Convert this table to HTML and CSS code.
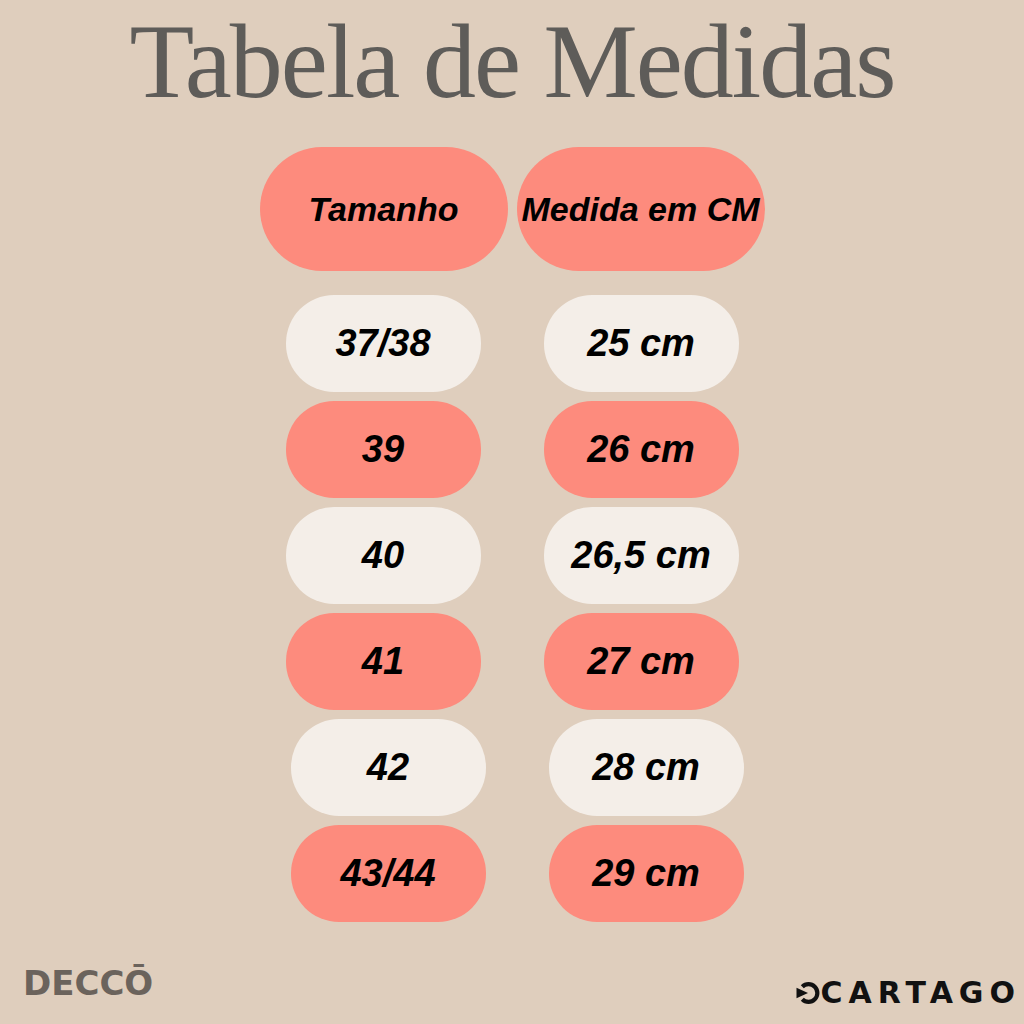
FILE: index.html
```html
<!DOCTYPE html>
<html lang="pt">
<head>
<meta charset="utf-8">
<title>Tabela de Medidas</title>
<link rel="stylesheet" href="styles.css">
</head>
<body>
<div class="page">
  <h1 class="title">Tabela de Medidas</h1>
  <div class="table">
    <div class="head-row">
      <div class="pill head">Tamanho</div>
      <div class="pill head">Medida em CM</div>
    </div>
    <div class="rows">
      <div class="row"><div class="pill cell light">37/38</div><div class="pill cell light">25 cm</div></div>
      <div class="row"><div class="pill cell salmon">39</div><div class="pill cell salmon">26 cm</div></div>
      <div class="row"><div class="pill cell light">40</div><div class="pill cell light">26,5 cm</div></div>
      <div class="row"><div class="pill cell salmon">41</div><div class="pill cell salmon">27 cm</div></div>
      <div class="row shift"><div class="pill cell light">42</div><div class="pill cell light">28 cm</div></div>
      <div class="row shift"><div class="pill cell salmon">43/44</div><div class="pill cell salmon">29 cm</div></div>
    </div>
  </div>
  <div class="footer">
    <div class="brand-left">DECCŌ</div>
    <div class="brand-right">
      <svg class="cartago-icon" width="24" height="24" viewBox="0 0 24 24" aria-hidden="true">
        <path d="M6.3 5.8 A8.8 8.8 0 1 1 6.3 18.2" fill="none" stroke="#111" stroke-width="4.2"/>
        <path d="M0.5 6.8 L12 12 L0.5 17.2 Z" fill="#111"/>
      </svg>
      <span class="cartago-text">CARTAGO</span>
    </div>
  </div>
</div>
</body>
</html>
```

FILE: styles.css
```css
html, body {
  margin: 0;
  padding: 0;
}
body {
  background: #dfcebd;
}
.page {
  width: 1024px;
  height: 1024px;
  display: flex;
  flex-direction: column;
  overflow: hidden;
}
.title {
  margin: 9px 0 0 0;
  font-family: "Liberation Serif", "Times New Roman", serif;
  font-weight: normal;
  font-size: 106px;
  line-height: 106px;
  letter-spacing: -2px;
  color: #5e5c59;
  text-align: center;
}
.table {
  margin-top: 32px;
  display: flex;
  flex-direction: column;
  align-items: center;
}
.head-row {
  display: flex;
  gap: 9px;
}
.pill {
  display: flex;
  align-items: center;
  justify-content: center;
  font-family: "Liberation Sans", Arial, sans-serif;
  font-weight: bold;
  font-style: italic;
  color: #000;
  white-space: nowrap;
}
.head {
  width: 248px;
  height: 124px;
  border-radius: 62px;
  background: #fd8b7d;
  font-size: 34px;
}
.rows {
  margin-top: 24px;
  display: flex;
  flex-direction: column;
  gap: 9px;
}
.row {
  display: flex;
  justify-content: center;
  gap: 63px;
}
.row.shift {
  padding-left: 10px;
}
.cell {
  width: 195px;
  height: 97px;
  border-radius: 48px;
  font-size: 38px;
}
.light {
  background: #f4eee8;
}
.salmon {
  background: #fd8b7d;
}
.footer {
  margin-top: 44px;
  display: flex;
  justify-content: space-between;
  align-items: flex-start;
}
.brand-left {
  padding-left: 23px;
  font-family: "DejaVu Sans", sans-serif;
  font-weight: bold;
  font-size: 34px;
  line-height: 34px;
  color: #6b635c;
}
.brand-right {
  margin-top: 12px;
  margin-right: 9px;
  display: flex;
  align-items: center;
  gap: 1px;
}
.cartago-icon {
  display: block;
}
.cartago-text {
  font-family: "DejaVu Sans", sans-serif;
  font-weight: bold;
  font-size: 30px;
  line-height: 30px;
  letter-spacing: 6px;
  margin-right: -6px;
  color: #111;
}
```
